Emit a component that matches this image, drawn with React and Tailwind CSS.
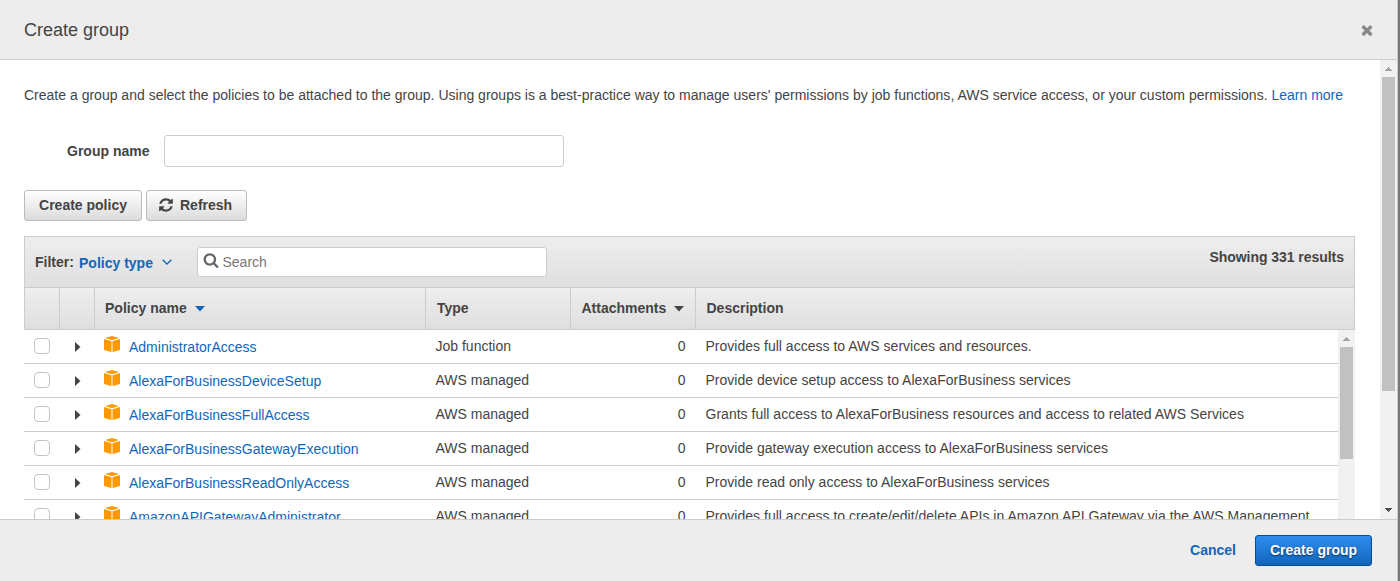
import React from "react";

const ICONS = {
  refresh:
    "M1639 1056q0 5-1 7-64 268-268 434.5t-478 166.5q-146 0-282.5-55t-243.5-157l-129 129q-19 19-45 19t-45-19-19-45v-448q0-26 19-45t45-19h448q26 0 45 19t19 45-19 45l-137 137q71 66 161 102t187 36q134 0 250-65t186-179q11-17 53-117 8-23 30-23h192q13 0 22.5 9.5t9.5 22.5zm25-800v448q0 26-19 45t-45 19h-448q-26 0-45-19t-19-45 19-45l138-138q-148-137-349-137-134 0-250 65t-186 179q-11 17-53 117-8 23-30 23h-199q-13 0-22.5-9.5t-9.5-22.5v-7q65-268 270-434.5t480-166.5q146 0 284 55.5t245 156.5l130-129q19-19 45-19t45 19 19 45z",
  times:
    "M1490 1322q0 40-28 68l-136 136q-28 28-68 28t-68-28l-294-294-294 294q-28 28-68 28t-68-28l-136-136q-28-28-28-68t28-68l294-294-294-294q-28-28-28-68t28-68l136-136q28-28 68-28t68 28l294 294 294-294q28-28 68-28t68 28l136 136q28 28 28 68t-28 68l-294 294 294 294q28 28 28 68z",
  search:
    "M1216 832q0-185-131.5-316.5t-316.5-131.5-316.5 131.5-131.5 316.5 131.5 316.5 316.5 131.5 316.5-131.5 131.5-316.5zm512 832q0 52-38 90t-90 38q-54 0-90-38l-343-342q-179 124-399 124-143 0-273.5-55.5t-225-150-150-225-55.5-273.5 55.5-273.5 150-225 225-150 273.5-55.5 273.5 55.5 225 150 150 225 55.5 273.5q0 220-124 399l343 343q37 37 37 90z",
};

function Icon({ name, className }) {
  return (
    <svg viewBox="0 0 1792 1792" fill="currentColor" className={`size-4 shrink-0 ${className}`}>
      <path d={ICONS[name]} />
    </svg>
  );
}

function Cube() {
  return (
    <svg viewBox="0 0 16 16" fill="#ff9900" className="mb-[5px] size-4 shrink-0">
      <path d="M8 0 15 2.1 8 4.3 1 2.1Z" />
      <path d="M0 3.1 7.5 5.2V16L0 14Z" />
      <path d="M16 3.1 8.5 5.2V16L16 14Z" />
    </svg>
  );
}

function Caret({ className }) {
  return (
    <svg viewBox="0 0 10 6" fill="currentColor" className={`h-1.5 w-2.5 ${className}`}>
      <path d="M0 0h10L5 5.5Z" />
    </svg>
  );
}

function ScrollArrow({ down }) {
  return (
    <div className={`flex h-[17px] shrink-0 items-center justify-center ${down ? "pb-0.5" : ""}`}>
      <svg viewBox="0 0 8 4" className="h-1 w-[7px]" shapeRendering="crispEdges">
        <path d={down ? "M0 0h8L4 4Z" : "M0 4h8L4 0Z"} fill={down ? "#505050" : "#a3a3a3"} />
      </svg>
    </div>
  );
}

const GRID = "grid grid-cols-[35px_35px_331px_145px_125px_1fr]";

const rows = [
  ["AdministratorAccess", "Job function", "Provides full access to AWS services and resources."],
  ["AlexaForBusinessDeviceSetup", "AWS managed", "Provide device setup access to AlexaForBusiness services"],
  ["AlexaForBusinessFullAccess", "AWS managed", "Grants full access to AlexaForBusiness resources and access to related AWS Services"],
  ["AlexaForBusinessGatewayExecution", "AWS managed", "Provide gateway execution access to AlexaForBusiness services"],
  ["AlexaForBusinessReadOnlyAccess", "AWS managed", "Provide read only access to AlexaForBusiness services"],
  ["AmazonAPIGatewayAdministrator", "AWS managed", "Provides full access to create/edit/delete APIs in Amazon API Gateway via the AWS Management"],
];

function Row({ name, type, description }) {
  return (
    <div className={`${GRID} h-[34px] items-center border-b border-[#ccc] whitespace-nowrap`}>
      <div className="pl-2.5">
        <div className="mb-px size-4 rounded-[4px] border border-[#c4c4c4] bg-white" />
      </div>
      <div className="pl-4">
        <svg viewBox="0 0 6 10" fill="#444" className="h-2.5 w-1.5">
          <path d="M0 0 5.5 5 0 10Z" />
        </svg>
      </div>
      <div className="flex items-center pl-2.5">
        <Cube />
        <a className="ml-[9px] pt-px text-[#1166bb]">{name}</a>
      </div>
      <div className="pb-px pl-[10.5px]">{type}</div>
      <div className="pr-[9.5px] pb-px text-right">0</div>
      <div className="pb-px pl-[10.5px] tracking-[0.015px]">{description}</div>
    </div>
  );
}

const button =
  "flex h-[31px] items-center rounded-[3px] border border-[#bbb] bg-linear-to-b from-white to-[#dcdcdc] pb-0.5 font-bold";

export default function App() {
  return (
    <div className="flex h-[581px] w-[1400px] overflow-hidden bg-[#777] font-['Liberation_Sans',Arial,sans-serif] text-sm leading-5 text-[#444]">
      <div className="flex w-[1398px] flex-col border-r border-[#ccc] bg-white">
        <header className="flex h-[60px] shrink-0 items-center justify-between border-b border-[#ccc] bg-[#ededed] pr-[22px] pl-6">
          <h1 className="text-lg">Create group</h1>
          <Icon name="times" className="text-[#888]" />
        </header>

        <div className="flex h-[459px] shrink-0">
          <main className="flex w-[1380px] flex-col overflow-hidden pt-[25px] pr-[25px] pl-6">
            <p className="tracking-[0.005px] whitespace-nowrap">
              Create a group and select the policies to be attached to the group. Using groups is a best-practice way to
              manage users' permissions by job functions, AWS service access, or your custom permissions.{" "}
              <a className="text-[#1166bb]">Learn more</a>
            </p>

            <div className="mt-[30px] flex items-center">
              <label className="w-[125.5px] text-right font-bold">Group name</label>
              <div className="ml-[14.5px] h-8 w-[400px] rounded-[3px] border border-[#ccc] bg-white" />
            </div>

            <div className="mt-[23px] flex gap-1">
              <button className={`${button} w-[118px] justify-center`}>Create policy</button>
              <button className={`${button} w-[101px] pl-[11px]`}>
                <Icon name="refresh" />
                <span className="ml-[6px]">Refresh</span>
              </button>
            </div>

            <section className="mt-[15px] shrink-0">
              <div className="flex h-[51px] border border-b-0 border-[#ccc] bg-linear-to-b from-[#eee] to-[#dfdfdf] pl-2.5 font-bold">
                <span className="mt-[15px] w-11">Filter:</span>
                <span className="mt-4 flex w-[93px] justify-between text-[#1166bb]">
                  Policy type
                  <svg viewBox="0 0 10 6" fill="none" stroke="currentColor" strokeWidth="1.3" className="mt-[6px] h-1.5 w-2.5">
                    <path d="M0.7 0.7 5 5 9.3 0.7" />
                  </svg>
                </span>
                <div className="mt-2.5 ml-[25px] flex h-[30px] w-[350px] items-center rounded-[3px] border border-[#ccc] bg-white pl-[5px] font-normal text-[#777]">
                  <Icon name="search" className="mb-1 text-[#666]" />
                  <span className="ml-[3.5px]">Search</span>
                </div>
                <span className="mt-2.5 mr-2.5 ml-auto tracking-[-0.04px]">Showing 331 results</span>
              </div>

              <div
                className={`${GRID} h-[43px] items-stretch border-y border-r border-[#ccc] bg-linear-to-b from-[#eee] to-[#dfdfdf] font-bold *:flex *:items-center *:border-l *:border-[#ccc] *:pb-0.5`}
              >
                <div />
                <div />
                <div className="pl-2.5">
                  Policy name
                  <Caret className="mt-[3px] ml-2 text-[#1166bb]" />
                </div>
                <div className="pl-[11px]">Type</div>
                <div className="pl-[10.5px]">
                  Attachments
                  <Caret className="mt-[3px] ml-2" />
                </div>
                <div className="pl-[10.5px]">Description</div>
              </div>

              <div className="flex h-[204px]">
                <div className="flex-1">
                  {rows.map(([name, type, description]) => (
                    <Row key={name} name={name} type={type} description={description} />
                  ))}
                </div>
                <div className="w-[17px] bg-[#f1f1f1]">
                  <ScrollArrow />
                  <div className="mx-0.5 h-28 bg-[#c1c1c1]" />
                </div>
              </div>
            </section>
          </main>

          <div className="flex w-[17px] flex-col bg-[#f1f1f1]">
            <ScrollArrow />
            <div className="mx-0.5 h-[314px] bg-[#c1c1c1]" />
            <div className="mt-auto">
              <ScrollArrow down />
            </div>
          </div>
        </div>

        <footer className="flex flex-1 items-center justify-end border-t border-[#ccc] bg-[#ededed] pr-[25px] font-bold">
          <a className="pb-0.5 text-[#1166bb]">Cancel</a>
          <button className="ml-[19px] h-[31px] w-[117px] rounded-[3px] border border-[#0d4a8c] bg-linear-to-b from-[#2e8df0] to-[#1166bb] pb-0.5 font-bold text-white [text-shadow:0_1px_2px_rgba(0,0,0,0.6)]">
            Create group
          </button>
        </footer>
      </div>
    </div>
  );
}
